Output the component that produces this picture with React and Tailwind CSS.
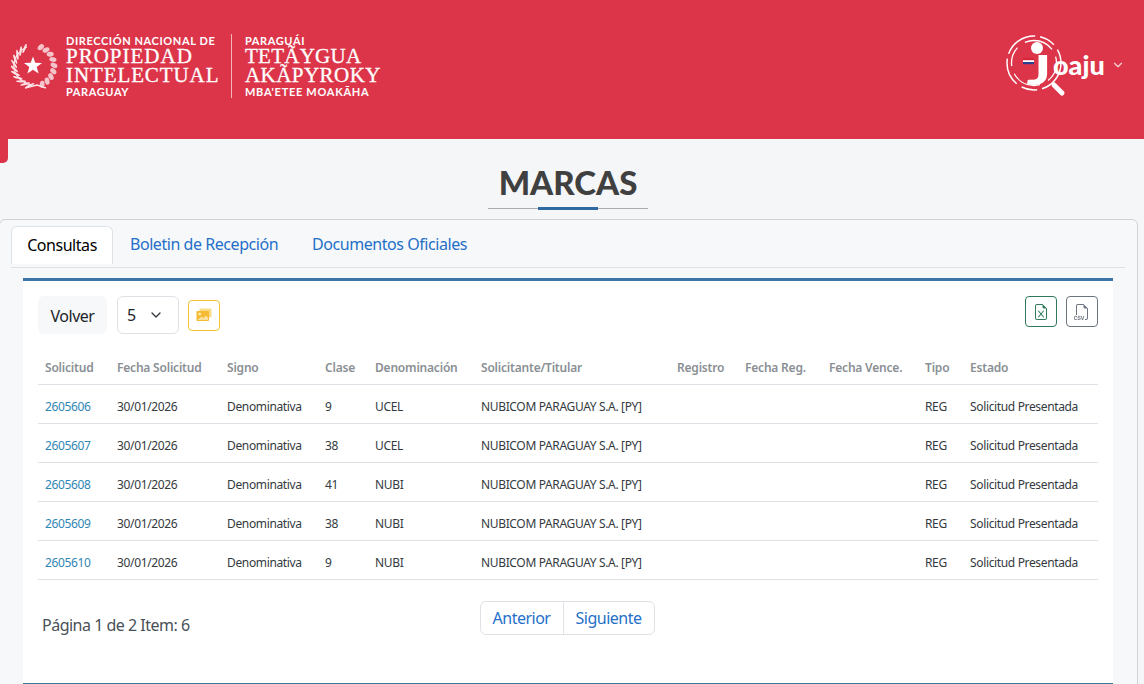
import React from 'react';
import { ChevronDown } from 'lucide-react';
import { BsFileEarmarkExcel, BsFiletypeCsv } from 'react-icons/bs';

const COLUMNS = [
  { name: 'Solicitud', width: 'w-[72px]' },
  { name: 'Fecha Solicitud', width: 'w-[110px]' },
  { name: 'Signo', width: 'w-[98px]' },
  { name: 'Clase', width: 'w-[50px]' },
  { name: 'Denominación', width: 'w-[106px]' },
  { name: 'Solicitante/Titular', width: 'w-[196px]' },
  { name: 'Registro', width: 'w-[68px]' },
  { name: 'Fecha Reg.', width: 'w-[84px]' },
  { name: 'Fecha Vence.', width: 'w-[96px]' },
  { name: 'Tipo', width: 'w-[45px]' },
  { name: 'Estado', width: 'w-[135px]' },
];

const ROWS = [
  ['2605606', '9', 'UCEL'],
  ['2605607', '38', 'UCEL'],
  ['2605608', '41', 'NUBI'],
  ['2605609', '38', 'NUBI'],
  ['2605610', '9', 'NUBI'],
];

// hojas de la corona: palma a la izquierda, olivo a la derecha
const PALM = [...Array(11)].map((_, i) => {
  const a = (118 + i * 14) * (Math.PI / 180);
  return { x: 23 + 20 * Math.cos(a), y: 22 - 20 * Math.sin(a), r: 118 + i * 14 };
});
const OLIVE = [...Array(9)].map((_, i) => {
  const a = (70 - i * 17) * (Math.PI / 180);
  return { x: 23 + 20 * Math.cos(a), y: 22 - 20 * Math.sin(a), r: 70 - i * 17 };
});

const Wreath = () => (
  <svg width="48" height="46" viewBox="0 0 48 46" fill="none" className="shrink-0">
    <path d="M16 3C7 7 2 15 3 24c1 8 8 15 18 17" stroke="#fbe3e6" strokeWidth="1.2" />
    {PALM.map((l, i) => (
      <ellipse key={i} cx={l.x} cy={l.y} rx="5" ry="1.1" fill="#fbe3e6" transform={`rotate(${50 - l.r} ${l.x} ${l.y})`} />
    ))}
    {OLIVE.map((l, i) => (
      <ellipse key={i} cx={l.x} cy={l.y} rx="3.6" ry="2.4" fill="#f5c4cb" transform={`rotate(${30 - l.r} ${l.x} ${l.y})`} />
    ))}
    <path d="M22 12.5l2.3 6.3 6.7.2-5.3 4.1 1.9 6.4-5.6-3.8-5.6 3.8 1.9-6.4-5.3-4.1 6.7-.2z" fill="#fff" />
    <path d="M14 44l12-3 9 3" stroke="#fbe3e6" strokeWidth="1.4" />
  </svg>
);

const JoajuLogo = () => (
  <svg width="104" height="64" viewBox="0 0 104 64" className="shrink-0">
    <circle cx="30" cy="29" r="27" fill="none" stroke="#fff" strokeWidth="1.5" strokeDasharray="34 5 16 6 28 5" />
    <circle cx="30" cy="29" r="22.5" fill="none" stroke="#fff" strokeWidth="1.3" strokeDasharray="20 9 30 8" />
    <path d="M50 51l8 8" stroke="#fff" strokeWidth="5" strokeLinecap="round" />
    <circle cx="33" cy="14" r="6" fill="#fff" />
    <text transform="translate(47 51) scale(1.35 1)" textAnchor="end" fontFamily="Lato, sans-serif" fontWeight="900" fontSize="42" fill="#fff">J</text>
    <rect x="19" y="24" width="11" height="2.2" fill="#d6243a" />
    <rect x="19" y="26.2" width="11" height="1.8" fill="#fff" />
    <rect x="19" y="28" width="11" height="2.2" fill="#2a3f8f" />
    <text x="49" y="41" fontFamily="Lato, sans-serif" fontWeight="900" fontSize="27" fill="#fff">oaju</text>
  </svg>
);

export default function App() {
  return (
    <div className="relative h-[684px] overflow-hidden bg-[#f4f6f8] font-['Noto_Sans',sans-serif] text-[#212529]">
      <header className="flex h-[139px] items-start justify-between bg-[#dc354a] pl-[11px] pr-[19px] pt-[34px] text-white">
        <div className="flex items-start">
          <div className="pt-[10px]"><Wreath /></div>
          <div className="ml-[7px] w-[165px] leading-none">
            <div className="h-[13px] whitespace-nowrap font-['Lato',sans-serif] text-[11px] font-bold leading-[13px] tracking-[0.6px]">DIRECCIÓN NACIONAL DE</div>
            <div className="h-[19px] font-['Liberation_Serif',serif] text-[21px] leading-[19px] tracking-[1px] [-webkit-text-stroke:0.3px_#fff]">PROPIEDAD</div>
            <div className="h-[19px] whitespace-nowrap font-['Liberation_Serif',serif] text-[21px] leading-[19px] tracking-[0.9px] [-webkit-text-stroke:0.3px_#fff]">INTELECTUAL</div>
            <div className="h-[13px] font-['Lato',sans-serif] text-[11px] font-bold leading-[13px] tracking-[0.6px]">PARAGUAY</div>
          </div>
          <div className="h-[64px] w-px bg-[#f2b3bb]" />
          <div className="ml-[13px] leading-none">
            <div className="h-[13px] font-['Lato',sans-serif] text-[11px] font-bold leading-[13px] tracking-[0.6px]">PARAGUÁI</div>
            <div className="h-[19px] font-['Liberation_Serif',serif] text-[21px] leading-[19px] tracking-[0.25px] [-webkit-text-stroke:0.3px_#fff]">TETÃYGUA</div>
            <div className="h-[19px] font-['Liberation_Serif',serif] text-[21px] leading-[19px] tracking-[0.45px] [-webkit-text-stroke:0.3px_#fff]">AKÃPYROKY</div>
            <div className="h-[13px] whitespace-nowrap font-['Lato',sans-serif] text-[11px] font-bold leading-[13px] tracking-[0.7px]">MBA'ETEE MOAKÃHA</div>
          </div>
        </div>
        <div className="flex items-center gap-[3px]">
          <JoajuLogo />
          <ChevronDown size={14} className="mt-[-2px] text-[#f8d5da]" />
        </div>
      </header>

      {/* pestaña roja */}
      <div className="absolute left-0 top-[139px] h-[24px] w-2 rounded-br-[5px] bg-[#dc354a]" />

      <div className="pr-[8px]">
        <h1 className="mt-[23px] text-center font-['Lato',sans-serif] text-[33px] font-black leading-[40px] text-[#404040]">MARCAS</h1>
        <div className="mx-auto mt-[5px] flex h-[3px] w-[160px] items-center justify-center bg-[linear-gradient(#0000_1px,#a9adb1_1px,#a9adb1_2px,#0000_2px)]">
          <div className="h-[3px] w-[60px] bg-[#2f6aa3]" />
        </div>
      </div>

      <div className="mt-[9px] ml-[-1px] h-[480px] w-[1139px] rounded-[6px] border border-[#cfd3d7] bg-[#f6f8fa] pl-[11px] pr-[12px] pt-[6px]">
        <nav className="flex h-[42px] border-b border-[#dee2e6] text-[16px] leading-[24px] tracking-[-0.45px]">
          <a className="h-[38px] w-[102px] rounded-t-[6px] border border-b-0 border-[#dee2e6] bg-white pt-[6px] text-center text-black">Consultas</a>
          <a className="ml-[17px] pt-[6px] text-[#2470c8]">Boletin de Recepción</a>
          <a className="ml-[34px] pt-[6px] text-[#2470c8]">Documentos Oficiales</a>
        </nav>

        <section className="ml-[12px] mt-[10px] h-[406px] w-[1090px] border-b border-t-[3px] border-b-[#3a7a96] border-t-[#3f75a6] bg-white px-[15px] pt-[15px]">
          <div className="flex h-[38px] items-center">
            <button className="h-[38px] w-[69px] rounded-[6px] bg-[#f6f8fa] pt-[1px] text-[16px] tracking-[-0.5px] text-[#212529]">Volver</button>
            <div className="ml-[10px] flex h-[38px] w-[62px] items-center justify-between rounded-[6px] border border-[#dee2e6] pl-[9px] pr-[14px] text-[16px]">
              5
              <ChevronDown size={16} strokeWidth={2} className="text-[#343a40]" />
            </div>
            <button className="ml-[9px] flex h-[31px] w-[32px] items-center justify-center rounded-[4px] border border-[#f2c230]">
              <svg width="16" height="14" viewBox="0 0 16 14">
                <rect x="3.5" y="0.5" width="12" height="9" rx="1" fill="#f8dc8a" />
                <rect x="0.5" y="3" width="12.5" height="10" rx="1" fill="#f4bb33" />
                <circle cx="3.8" cy="6" r="1.3" fill="#fff3cf" />
                <path d="M1.5 12l4-3.5 2 1.5 2.5-2.5 2 2V12z" fill="#fbe0a0" />
              </svg>
            </button>
            <div className="ml-auto flex self-start gap-[9px]">
              <button className="flex h-[31px] w-[32px] items-center justify-center rounded-[4px] border border-[#2f7a5b] text-[#2f7a5b]">
                <BsFileEarmarkExcel size={16} />
              </button>
              <button className="flex h-[31px] w-[32px] items-center justify-center rounded-[4px] border border-[#6c757d] text-[#6c757d]">
                <BsFiletypeCsv size={16} />
              </button>
            </div>
          </div>

          <table className="mt-[13px] w-[1060px] table-fixed border-collapse text-[12px] leading-[18px] tracking-[-0.35px]">
            <thead>
              <tr className="h-[37px] border-b border-[#dee2e6] text-left tracking-[-0.2px] text-[#8a8f94]">
                {COLUMNS.map((col) => (
                  <th key={col.name} className={`${col.width} whitespace-nowrap px-[7px] pt-[6px] font-semibold`}>{col.name}</th>
                ))}
              </tr>
            </thead>
            <tbody>
              {ROWS.map(([id, clase, denominacion]) => (
                <tr key={id} className="h-[39px] border-b border-[#dee2e6] text-[#343a40]">
                  <td className="px-[7px] pt-[6px] text-[#2f86b5]">{id}</td>
                  <td className="px-[7px] pt-[6px]">30/01/2026</td>
                  <td className="px-[7px] pt-[6px]">Denominativa</td>
                  <td className="px-[7px] pt-[6px]">{clase}</td>
                  <td className="px-[7px] pt-[6px]">{denominacion}</td>
                  <td className="whitespace-nowrap px-[7px] pt-[6px]">NUBICOM PARAGUAY S.A. [PY]</td>
                  <td className="px-[7px]"></td>
                  <td className="px-[7px]"></td>
                  <td className="px-[7px]"></td>
                  <td className="px-[7px] pt-[6px]">REG</td>
                  <td className="whitespace-nowrap px-[7px] pt-[6px]">Solicitud Presentada</td>
                </tr>
              ))}
            </tbody>
          </table>

          <div className="relative mt-[21px] flex h-[34px] justify-center">
            <p className="absolute left-[4px] top-[12px] text-[16px] leading-[24px] tracking-[-0.5px] text-[#495057]">Página 1 de 2 Item: 6</p>
            <div className="ml-[-2px] flex rounded-[6px] border border-[#dee2e6] text-[16px] tracking-[-0.5px] text-[#2470c8]">
              <a className="flex w-[83px] items-center justify-center border-r border-[#dee2e6] pt-[1px]">Anterior</a>
              <a className="flex w-[90px] items-center justify-center pt-[1px]">Siguiente</a>
            </div>
          </div>
        </section>
      </div>
    </div>
  );
}
